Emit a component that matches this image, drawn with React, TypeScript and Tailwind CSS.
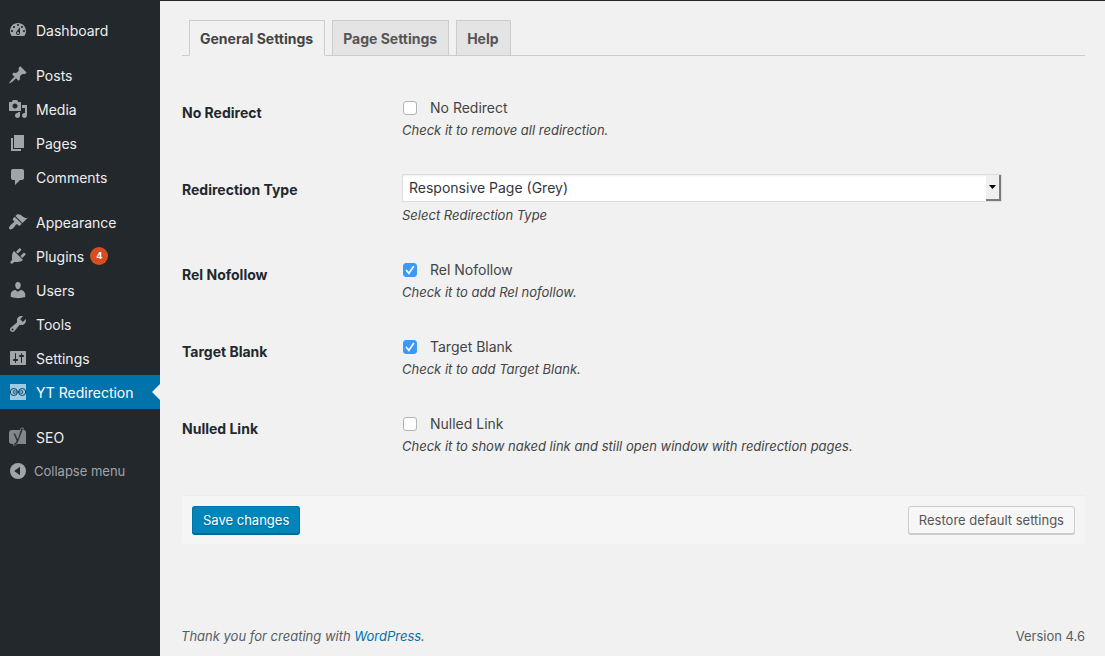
import { useId, useState } from "react";
import type { ReactNode } from "react";

const paths = {
  dashboard:
    "M3.76 16h12.48c1.1-1.37 1.76-3.11 1.76-5 0-4.42-3.58-8-8-8s-8 3.58-8 8c0 1.89.66 3.63 1.76 5zM10 4c.55 0 1 .45 1 1s-.45 1-1 1-1-.45-1-1 .45-1 1-1zM6 6c.55 0 1 .45 1 1s-.45 1-1 1-1-.45-1-1 .45-1 1-1zm8 0c.55 0 1 .45 1 1s-.45 1-1 1-1-.45-1-1 .45-1 1-1zm-5.37 5.55L12 7v6c0 1.1-.9 2-2 2s-2-.9-2-2c0-.57.24-1.08.63-1.45zM4 10c.55 0 1 .45 1 1s-.45 1-1 1-1-.45-1-1 .45-1 1-1zm12 0c.55 0 1 .45 1 1s-.45 1-1 1-1-.45-1-1 .45-1 1-1zm-5 3c0-.55-.45-1-1-1s-1 .45-1 1 .45 1 1 1 1-.45 1-1z",
  posts:
    "M10.44 3.02l1.82-1.82 6.36 6.35-1.83 1.82c-1.05-.68-2.48-.57-3.41.36l-.75.75c-.92.93-1.04 2.35-.35 3.41l-1.83 1.82-2.41-2.41-2.8 2.79c-.42.42-3.38 2.71-3.8 2.29s1.86-3.39 2.28-3.81l2.79-2.79L4.1 9.36l1.83-1.82c1.05.69 2.48.57 3.4-.36l.75-.75c.93-.92 1.05-2.35.36-3.41z",
  media:
    "M13 11V4c0-.55-.45-1-1-1h-1.67L9 1H5L3.67 3H2c-.55 0-1 .45-1 1v7c0 .55.45 1 1 1h10c.55 0 1-.45 1-1zM7 4.5c1.38 0 2.5 1.12 2.5 2.5S8.38 9.5 7 9.5 4.5 8.38 4.5 7 5.62 4.5 7 4.5zM14 6h5v10.5c0 1.38-1.12 2.5-2.5 2.5S14 17.88 14 16.5s1.12-2.5 2.5-2.5c.17 0 .34.02.5.05V9h-3V6zm-4 8.05V13h2v3.5c0 1.38-1.12 2.5-2.5 2.5S7 17.88 7 16.5 8.12 14 9.5 14c.17 0 .34.02.5.05z",
  pages: "M6 15V2h10v13H6zm-1 1h8v2H3V5h2v11z",
  comments:
    "M5 2h9c1.1 0 2 .9 2 2v7c0 1.1-.9 2-2 2h-2l-5 5v-5H5c-1.1 0-2-.9-2-2V4c0-1.1.9-2 2-2z",
  appearance:
    "M14.48 11.06L7.41 3.99l1.5-1.5c.5-.56 2.3-.47 3.51.32 1.21.8 1.43 1.28 2.91 2.1 1.18.64 2.45 1.26 4.45.85zm-.71.71L6.7 4.7 4.93 6.47c-.39.39-.39 1.02 0 1.41l1.06 1.06c.39.39.39 1.03 0 1.42-.6.6-1.43 1.11-2.21 1.69-.35.26-.7.53-1.01.84C1.43 14.23.4 16.08 1.4 17.07c.99 1 2.84-.03 4.18-1.36.31-.31.58-.66.85-1.02.57-.78 1.08-1.61 1.69-2.21.39-.39 1.02-.39 1.41 0l1.06 1.06c.39.39 1.02.39 1.41 0z",
  plugins:
    "M13.11 4.36L9.87 7.6 8 5.73l3.24-3.24c.35-.34 1.05-.2 1.56.32.52.51.66 1.21.31 1.55zm-8 1.77l.91-1.12 9.01 9.01-1.19.84c-.71.71-2.63 1.16-3.82 1.16H6.14L4.9 17.26c-.59.59-1.54.59-2.12 0-.59-.58-.59-1.53 0-2.12l1.24-1.24v-3.88c0-1.13.4-3.19 1.09-3.89zm7.26 3.97l3.24-3.24c.34-.35 1.04-.21 1.55.31.52.51.66 1.21.31 1.55l-3.24 3.25z",
  users:
    "M10 9.25c-2.27 0-2.73-3.44-2.73-3.44C7 4.02 7.82 2 9.97 2c2.16 0 2.98 2.02 2.71 3.81 0 0-.41 3.44-2.68 3.44zm0 2.57L12.72 10c2.39 0 4.52 2.33 4.52 4.53v2.49s-3.65 1.13-7.24 1.13c-3.65 0-7.24-1.13-7.24-1.13v-2.49c0-2.25 1.94-4.48 4.47-4.48z",
  tools:
    "M16.68 9.77c-1.34 1.34-3.3 1.67-4.95.99l-5.41 6.52c-.99.99-2.59.99-3.58 0s-.99-2.59 0-3.57l6.52-5.42c-.68-1.65-.35-3.61.99-4.95 1.28-1.28 3.12-1.62 4.72-1.06l-2.89 2.89 2.82 2.82 2.86-2.87c.53 1.58.18 3.39-1.08 4.65zM3.81 16.21c.4.39 1.04.39 1.43 0 .4-.4.4-1.04 0-1.43-.39-.4-1.03-.4-1.43 0-.39.39-.39 1.03 0 1.43z",
  settings:
    "M18 16V4c0-.55-.45-1-1-1H3c-.55 0-1 .45-1 1v12c0 .55.45 1 1 1h14c.55 0 1-.45 1-1zM8 11h1c.55 0 1 .45 1 1s-.45 1-1 1H8v1.5c0 .28-.22.5-.5.5s-.5-.22-.5-.5V13H6c-.55 0-1-.45-1-1s.45-1 1-1h1V5.5c0-.28.22-.5.5-.5s.5.22.5.5V11zm5-2h-1c-.55 0-1-.45-1-1s.45-1 1-1h1V5.5c0-.28.22-.5.5-.5s.5.22.5.5V7h1c.55 0 1 .45 1 1s-.45 1-1 1h-1v5.5c0 .28-.22.5-.5.5s-.5-.22-.5-.5V9z",
};

function Icon({ d }: { d: string }) {
  return (
    <svg viewBox="0 0 20 20" className="size-5 fill-[#a0a5aa]" aria-hidden="true">
      <path d={d} fillRule="evenodd" />
    </svg>
  );
}

function LinkIcon() {
  return (
    <svg viewBox="0 0 20 20" className="size-5" aria-hidden="true">
      <rect x="2" y="2" width="16" height="16" fill="#9fcbe2" />
      <rect x="6.5" y="8.500" width="7" height="3" rx="1.500" fill="#5f93ad" />
      <g fill="none" stroke="#0b4260" strokeWidth="1">
        <circle cx="5.800" cy="10" r="3.500" />
        <circle cx="14.200" cy="10" r="3.500" />
        <path d="M7.200 8.600a1.500 1.500 0 1 0 0 2.800M12.800 8.600a1.500 1.500 0 1 1 0 2.800" strokeWidth=".8" />
      </g>
    </svg>
  );
}

function SeoIcon() {
  return (
    <svg viewBox="0 0 20 20" className="size-5" aria-hidden="true">
      <path d="M4 3H16a2 2 0 0 1 2 2V17H4a3 3 0 0 1-3-3V6a3 3 0 0 1 3-3z" fill="#82878c" />
      <path
        d="M13 1h2.600L10.900 13.600c-.9 2.600-2.400 4.600-5.400 4.800v-1.900c1.600-.2 2.500-1.400 2.700-2.700L5.200 6.300h2.200l2.300 5.300z"
        fill="#2b3035"
        stroke="#82878c"
        strokeWidth=".7"
      />
    </svg>
  );
}

function CollapseIcon() {
  return (
    <svg viewBox="0 0 20 20" className="size-5" aria-hidden="true">
      <circle cx="10" cy="10" r="8" fill="#a0a5aa" />
      <path d="M12 5.800v8.400L6.200 10z" fill="#23282d" />
    </svg>
  );
}

type Item = { label: string; icon: ReactNode; badge?: number; active?: boolean };

const groups: Item[][] = [
  [{ label: "Dashboard", icon: <Icon d={paths.dashboard} /> }],
  [
    { label: "Posts", icon: <Icon d={paths.posts} /> },
    { label: "Media", icon: <Icon d={paths.media} /> },
    { label: "Pages", icon: <Icon d={paths.pages} /> },
    { label: "Comments", icon: <Icon d={paths.comments} /> },
  ],
  [
    { label: "Appearance", icon: <Icon d={paths.appearance} /> },
    { label: "Plugins", icon: <Icon d={paths.plugins} />, badge: 4 },
    { label: "Users", icon: <Icon d={paths.users} /> },
    { label: "Tools", icon: <Icon d={paths.tools} /> },
    { label: "Settings", icon: <Icon d={paths.settings} /> },
    { label: "YT Redirection", icon: <LinkIcon />, active: true },
  ],
  [{ label: "SEO", icon: <SeoIcon /> }],
];

function MenuItem({ label, icon, badge, active }: Item) {
  return (
    <li>
      <a
        href="#"
        aria-current={active ? "page" : undefined}
        className={`relative flex h-[34px] items-center gap-2 pl-2 ${active ? "bg-[#0073aa] text-white" : "text-[#eeeeee]"}`}
      >
        {icon}
        <span className="pt-0.5">{label}</span>
        {badge !== undefined && (
          <span className="-ml-0.5 flex size-[18px] items-center justify-center rounded-full bg-[#d54e21] text-[9px] font-bold text-white">
            {badge}
          </span>
        )}
        {active && (
          <span className="absolute top-1/2 right-0 -translate-y-1/2 border-8 border-l-0 border-transparent border-r-[#f1f1f1]" />
        )}
      </a>
    </li>
  );
}

function Sidebar() {
  return (
    <nav className="w-40 shrink-0 bg-[#23282d] pt-3 text-sm" aria-label="Main menu">
      <div className="flex flex-col gap-[11px]">
        {groups.map((group) => (
          <ul key={group[0].label}>
            {group.map((item) => (
              <MenuItem key={item.label} {...item} />
            ))}
          </ul>
        ))}
      </div>
      <button type="button" className="flex h-[34px] w-full items-center gap-1.5 pl-2 text-[13px] text-[#a0a5aa]">
        <CollapseIcon />
        Collapse menu
      </button>
    </nav>
  );
}

function Row({ title, children }: { title: string; children: ReactNode }) {
  return (
    <div className="flex">
      <div className="w-[220px] shrink-0 pt-5 text-sm leading-[18px] font-bold text-[#23282d]">{title}</div>
      <div className="min-w-0 flex-1 pt-[13px] pb-5">{children}</div>
    </div>
  );
}

function Hint({ children }: { children: ReactNode }) {
  return <p className="text-[13px] leading-[22px] text-[#444444] italic">{children}</p>;
}

function CheckRow({ title, hint, initial = false }: { title: string; hint: string; initial?: boolean }) {
  const id = useId();
  const [on, setOn] = useState(initial);
  return (
    <Row title={title}>
      <div className="flex h-[22px] items-center gap-[13px] pl-px text-sm text-[#444444]">
        <span className="relative flex">
          <input
            id={id}
            type="checkbox"
            checked={on}
            onChange={(e) => setOn(e.target.checked)}
            className="size-3.5 appearance-none rounded-[3px] border border-[#b4b4b4] bg-white checked:border-[#3b99fc] checked:bg-[#3b99fc]"
          />
          {on && (
            <svg viewBox="0 0 14 14" className="pointer-events-none absolute inset-0 size-3.5" aria-hidden="true">
              <path d="M3.500 7.400l2.400 2.900 4.600-6.800" fill="none" stroke="#fff" strokeWidth="1.600" strokeLinecap="round" />
            </svg>
          )}
        </span>
        <label htmlFor={id}>{title}</label>
      </div>
      <Hint>{hint}</Hint>
    </Row>
  );
}

function SelectRow() {
  return (
    <Row title="Redirection Type">
      <div className="relative mb-0.5 max-w-[600px]">
        <select
          aria-label="Redirection Type"
          className="block h-7 w-full appearance-none border border-[#dddddd] bg-white pl-1.5 text-sm text-[#32373c] shadow-[inset_0_1px_2px_rgba(0,0,0,0.07)]"
        >
          <option>Responsive Page (Grey)</option>
        </select>
        <span className="pointer-events-none absolute inset-y-px right-px flex w-[15px] items-center justify-center border-r-2 border-b-2 border-[#7b7b7b] bg-[#f0f0f0]">
          <svg viewBox="0 0 7 4" className="h-1 w-[7px]" aria-hidden="true">
            <path d="M0 0h7L3.500 4z" />
          </svg>
        </span>
      </div>
      <Hint>Select Redirection Type</Hint>
    </Row>
  );
}

const tabs = ["General Settings", "Page Settings", "Help"];

export default function App() {
  const [tab, setTab] = useState(tabs[0]);
  return (
    <div className="flex min-h-screen flex-col border-t border-[#23282d] bg-[#f1f1f1] font-['Inter',sans-serif]">
      <div className="flex flex-1">
        <Sidebar />
        <div className="flex min-w-0 flex-1 flex-col pr-5 pl-[22px]">
          <main>
            <div role="tablist" className="flex gap-[7px] border-b border-[#cccccc] pt-[19px] pl-[7px]">
              {tabs.map((name) => (
                <button
                  key={name}
                  type="button"
                  role="tab"
                  aria-selected={name === tab}
                  onClick={() => setTab(name)}
                  className={`-mb-px h-9 border border-[#cccccc] pt-0.5 pr-[11px] pl-2.5 text-sm font-bold ${
                    name === tab ? "border-b-[#f1f1f1] bg-[#f1f1f1] text-[#444444]" : "bg-[#e4e4e4] text-[#555555]"
                  }`}
                >
                  {name}
                </button>
              ))}
            </div>
            <form onSubmit={(e) => e.preventDefault()}>
              <div className="pt-7 pb-[18px]">
                <CheckRow title="No Redirect" hint="Check it to remove all redirection." />
                <SelectRow />
                <CheckRow title="Rel Nofollow" hint="Check it to add Rel nofollow." initial />
                <CheckRow title="Target Blank" hint="Check it to add Target Blank." initial />
                <CheckRow
                  title="Nulled Link"
                  hint="Check it to show naked link and still open window with redirection pages."
                />
              </div>
              <div className="flex justify-between rounded-b-[3px] border-t border-[#ececec] bg-[#f5f5f5] px-2.5 py-2.5 text-[13px]">
                <button
                  type="submit"
                  className="h-7 rounded-[3px] border border-[#0073aa] border-b-[#006799] bg-[#0085ba] px-2.5 pt-0.5 text-white shadow-[0_1px_0_#006799] text-shadow-[0_1px_1px_#006799]"
                >
                  Save changes
                </button>
                <button
                  type="button"
                  className="h-7 rounded-[3px] border border-[#cccccc] bg-[#f7f7f7] px-2.5 pt-0.5 text-[#555555] shadow-[0_1px_0_#cccccc]"
                >
                  Restore default settings
                </button>
              </div>
            </form>
          </main>
          <footer className="mt-auto -ml-px flex justify-between pb-2.5 text-[13px] leading-5 text-[#555d66]">
            <p className="italic">
              Thank you for creating with{" "}
              <a href="#" className="text-[#0073aa]">
                WordPress
              </a>
              .
            </p>
            <p>Version 4.6</p>
          </footer>
        </div>
      </div>
    </div>
  );
}
